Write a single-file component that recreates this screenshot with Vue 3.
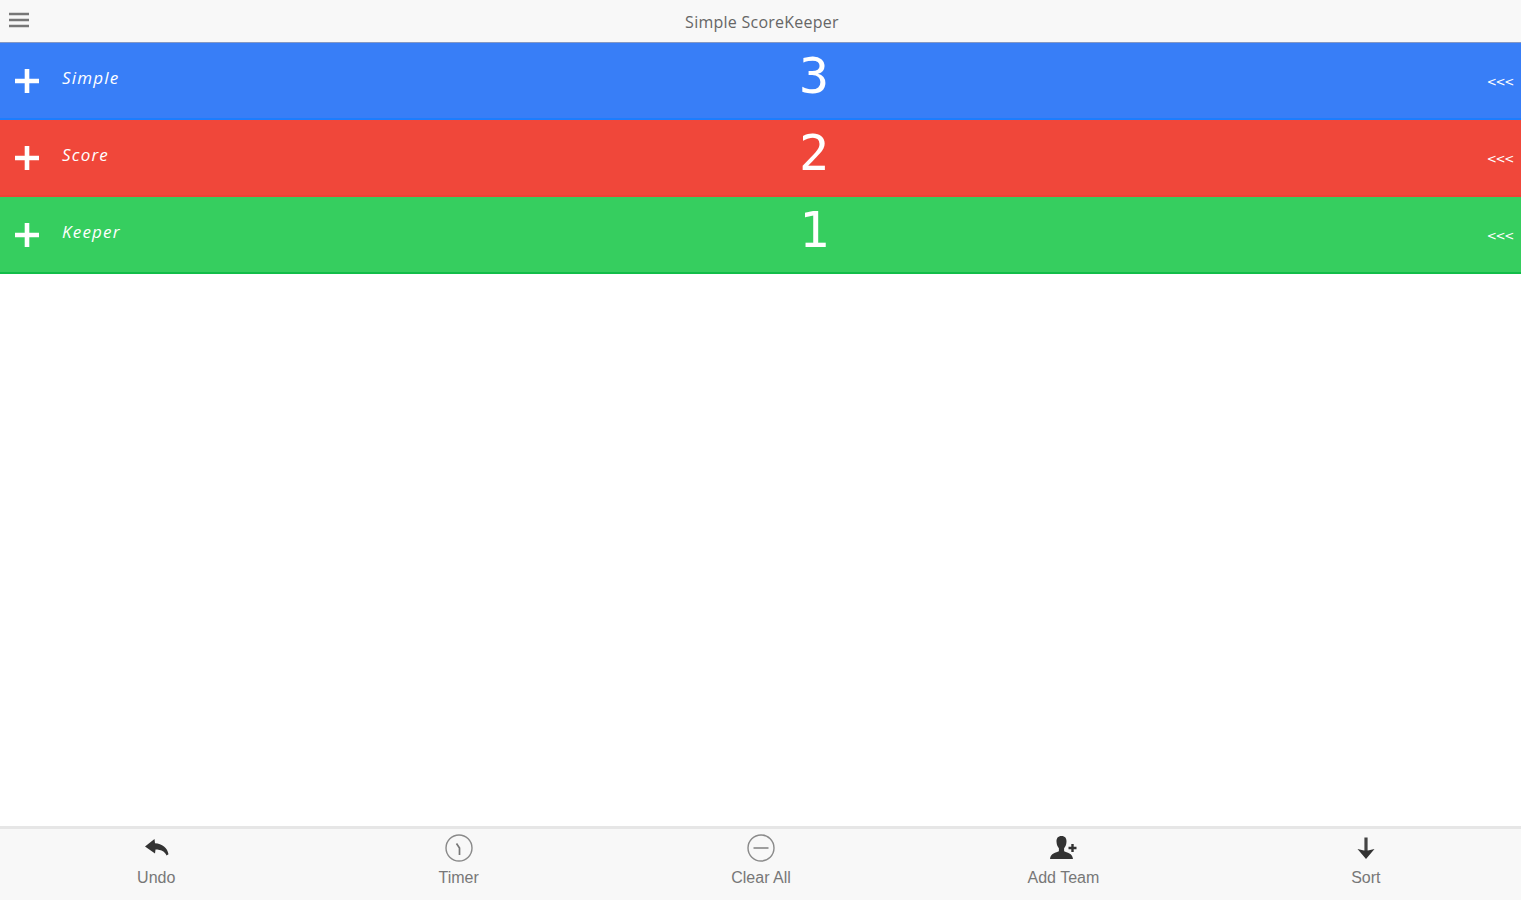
<template>
  <div class="app">

    <!-- HEADER -->
    <header class="top-bar">
      <button class="menu-btn" aria-label="Menu">
        <svg width="20" height="16" viewBox="0 0 20 16">
          <path d="M0 2h20M0 8h20M0 14h20" stroke="#777" stroke-width="2.4" />
        </svg>
      </button>
      <h1 class="title">Simple ScoreKeeper</h1>
    </header>

    <!-- TEAMS -->
    <main class="teams">
      <div v-for="team in teams" :key="team.name" class="team" :class="team.color">
        <button class="plus-btn" aria-label="Add point" @click="addPoint(team)">
          <svg width="24" height="24" viewBox="0 0 24 24">
            <path d="M12 0v24M0 12h24" stroke="#fff" stroke-width="4.6" />
          </svg>
        </button>
        <span class="name">{{ team.name }}</span>
        <span class="score">{{ team.score }}</span>
        <span class="swipe">&lt;&lt;&lt;</span>
      </div>
    </main>

    <!-- FOOTER -->
    <footer class="tab-bar">
      <button class="tab" @click="undo">
        <svg class="icon" width="28" height="28" viewBox="0 0 28 28">
          <path d="M3 12.500L12.500 5l.5 4.200c7 .3 12.500 4.500 13.500 11l-2 1.300c-1.500-4-5.500-6-11-6l-.5 4z" fill="#333" />
        </svg>
        <span class="label">Undo</span>
      </button>

      <button class="tab">
        <svg class="icon" width="28" height="28" viewBox="0 0 28 28" fill="none">
          <circle cx="14" cy="14" r="13" stroke="#8a8a8a" stroke-width="1.4" />
          <path d="M11.500 9.500l3 4.500v7" stroke="#777" stroke-width="1.7" />
        </svg>
        <span class="label">Timer</span>
      </button>

      <button class="tab" @click="clearAll">
        <svg class="icon" width="28" height="28" viewBox="0 0 28 28" fill="none">
          <circle cx="14" cy="14" r="13" stroke="#8a8a8a" stroke-width="1.4" />
          <path d="M6.500 14h15" stroke="#888" stroke-width="1.6" />
        </svg>
        <span class="label">Clear All</span>
      </button>

      <button class="tab">
        <svg class="icon" width="28" height="28" viewBox="0 0 28 28" fill="#333">
          <path d="M12.500 2c3.600 0 5.200 2.400 5 5.700-.2 3.200-1.200 5-2.400 6.600v2.900c2.800 1.500 8.400 1.700 8.900 7.800H1c.5-6.100 6.100-6.300 8.900-7.800v-2.900c-1.200-1.600-2.200-3.400-2.400-6.600-.2-3.300 1.400-5.700 5-5.700z" />
          <path d="M23.500 10v8M19.500 14h8" stroke="#333" stroke-width="2.400" />
        </svg>
        <span class="label">Add Team</span>
      </button>

      <button class="tab" @click="sortTeams">
        <svg class="icon" width="28" height="28" viewBox="0 0 28 28">
          <path d="M14 3.500v17" stroke="#444" stroke-width="3.200" />
          <path d="M5.500 15l6.500 1.500h4l6.500-1.500L14 25z" fill="#333" />
        </svg>
        <span class="label">Sort</span>
      </button>
    </footer>

  </div>
</template>

<script setup>
import { ref } from 'vue'

const teams = ref([
  { name: 'Simple', score: 3, color: 'blue' },
  { name: 'Score', score: 2, color: 'red' },
  { name: 'Keeper', score: 1, color: 'green' }
])
const history = ref([])

const addPoint = (team) => {
  history.value.push(team)
  team.score++
}

const undo = () => {
  const last = history.value.pop()
  if (last) {
    last.score--
  }
}

const clearAll = () => {
  history.value = []
  teams.value.forEach((team) => {
    team.score = 0
  })
}

const sortTeams = () => {
  teams.value.sort((a, b) => b.score - a.score)
}
</script>

<style>
body {
  margin: 0;
  background: #fff;
}
</style>

<style scoped>
.app {
  display: flex;
  flex-direction: column;
  height: 100vh;
  overflow: hidden;
  font-family: "DejaVu Sans", sans-serif;
}

button {
  padding: 0;
  border: 0;
  background: none;
  font: inherit;
}

svg {
  display: block;
}

.top-bar {
  display: grid;
  grid-template-columns: 60px 1fr 60px;
  align-items: center;
  box-sizing: border-box;
  height: 43px;
  border-bottom: 1px solid #8498c4;
  background: #f8f8f8;
}

.menu-btn {
  padding: 0 0 3px 9px;
}

.title {
  margin: 0;
  padding: 1px 0 0 3px;
  color: #666;
  font-family: "Open Sans", sans-serif;
  font-size: 16px;
  font-weight: 400;
  letter-spacing: 0.25px;
  text-align: center;
}

.teams {
  flex: 1;
}

.team {
  display: grid;
  grid-template-columns: 62px 722px 60px 1fr;
  align-items: center;
  box-sizing: border-box;
  height: 77px;
  border-bottom: 2px solid;
  color: #fff;
}

.blue {
  border-color: #1d7dfd;
  background: #387ef7;
}

.red {
  border-color: #ef4136;
  background: #f0473a;
}

.green {
  border-color: #12bd49;
  background: #36ce5f;
}

.plus-btn {
  padding-left: 15px;
}

.name {
  padding-bottom: 6px;
  font-family: "Open Sans", sans-serif;
  font-size: 17px;
  font-style: italic;
  letter-spacing: 1.2px;
}

.score {
  padding-bottom: 10px;
  font-family: "DejaVu Sans Mono", monospace;
  font-size: 50px;
  line-height: 60px;
  text-align: center;
}

.swipe {
  padding: 2px 8px 0 0;
  font-size: 12px;
  letter-spacing: -1.3px;
  text-align: right;
}

.tab-bar {
  display: flex;
  box-sizing: border-box;
  height: 74px;
  padding: 0 4px 0 5px;
  border-top: 3px solid #e6e6e6;
  background: #f8f8f8;
}

.tab {
  display: flex;
  flex: 1;
  flex-direction: column;
  align-items: center;
  padding-top: 5px;
}

.label {
  margin-top: 6px;
  color: #777;
  font-family: "Liberation Sans", Arial, sans-serif;
  font-size: 16px;
  line-height: 20px;
}
</style>
